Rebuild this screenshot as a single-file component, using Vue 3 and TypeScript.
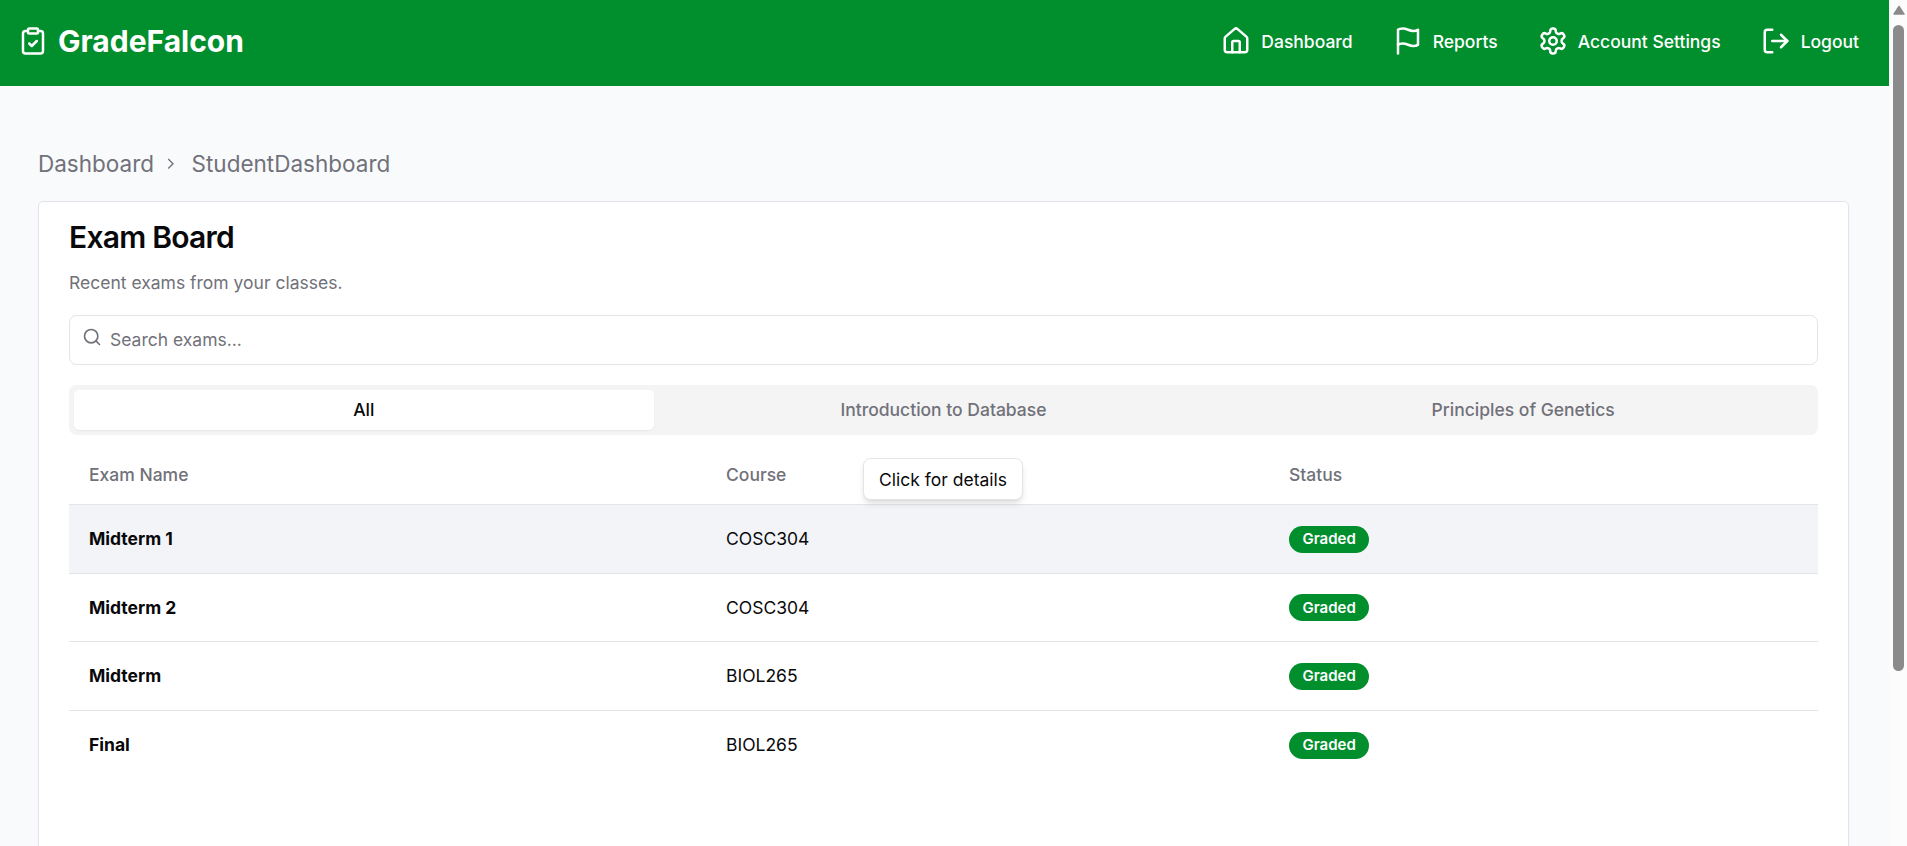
<script setup lang="ts">
interface NavItem {
  label: string
  paths: string[]
}

interface Exam {
  name: string
  course: string
  status: string
}

const navItems: NavItem[] = [
  {
    label: 'Dashboard',
    paths: [
      'M15 21v-8a1 1 0 0 0-1-1h-4a1 1 0 0 0-1 1v8',
      'M3 10a2 2 0 0 1 .709-1.528l7-5.999a2 2 0 0 1 2.582 0l7 5.999A2 2 0 0 1 21 10v9a2 2 0 0 1-2 2H5a2 2 0 0 1-2-2z',
    ],
  },
  {
    label: 'Reports',
    paths: ['M4 15s1-1 4-1 5 2 8 2 4-1 4-1V3s-1 1-4 1-5-2-8-2-4 1-4 1z', 'M4 22v-7'],
  },
  {
    label: 'Account Settings',
    paths: [
      'M12.22 2h-.44a2 2 0 0 0-2 2v.18a2 2 0 0 1-1 1.73l-.43.25a2 2 0 0 1-2 0l-.15-.08a2 2 0 0 0-2.73.73l-.22.38a2 2 0 0 0 .73 2.73l.15.1a2 2 0 0 1 1 1.72v.51a2 2 0 0 1-1 1.74l-.15.09a2 2 0 0 0-.73 2.73l.22.38a2 2 0 0 0 2.73.73l.15-.08a2 2 0 0 1 2 0l.43.25a2 2 0 0 1 1 1.73V20a2 2 0 0 0 2 2h.44a2 2 0 0 0 2-2v-.18a2 2 0 0 1 1-1.73l.43-.25a2 2 0 0 1 2 0l.15.08a2 2 0 0 0 2.73-.73l.22-.39a2 2 0 0 0-.73-2.73l-.15-.08a2 2 0 0 1-1-1.74v-.5a2 2 0 0 1 1-1.74l.15-.09a2 2 0 0 0 .73-2.73l-.22-.38a2 2 0 0 0-2.73-.73l-.15.08a2 2 0 0 1-2 0l-.43-.25a2 2 0 0 1-1-1.73V4a2 2 0 0 0-2-2z',
      'M15 12a3 3 0 1 1-6 0 3 3 0 0 1 6 0z',
    ],
  },
  {
    label: 'Logout',
    paths: ['M9 21H5a2 2 0 0 1-2-2V5a2 2 0 0 1 2-2h4', 'm16 17 5-5-5-5', 'M21 12H9'],
  },
]

const tabs: string[] = ['All', 'Introduction to Database', 'Principles of Genetics']

const exams: Exam[] = [
  { name: 'Midterm 1', course: 'COSC304', status: 'Graded' },
  { name: 'Midterm 2', course: 'COSC304', status: 'Graded' },
  { name: 'Midterm', course: 'BIOL265', status: 'Graded' },
  { name: 'Final', course: 'BIOL265', status: 'Graded' },
]
</script>

<template>
  <div class="window">
    <div class="page">
      <header class="topbar">
        <div class="brand">
          <svg class="icon" viewBox="0 0 24 24">
            <rect x="8" y="2" width="8" height="4" rx="1" />
            <path d="M16 4h2a2 2 0 0 1 2 2v14a2 2 0 0 1-2 2H6a2 2 0 0 1-2-2V6a2 2 0 0 1 2-2h2" />
            <path d="m9 14 2 2 4-4" />
          </svg>
          <span class="brand-name">GradeFalcon</span>
        </div>
        <nav class="nav">
          <a v-for="item in navItems" :key="item.label" class="nav-link">
            <svg class="icon" viewBox="0 0 24 24">
              <path v-for="d in item.paths" :key="d" :d="d" />
            </svg>
            <span>{{ item.label }}</span>
          </a>
        </nav>
      </header>

      <main class="main">
        <div class="breadcrumb">
          <span>Dashboard</span>
          <svg class="chevron" viewBox="0 0 15 15"><path d="M6.2 3.4 10.3 7.5 6.2 11.6" /></svg>
          <span>StudentDashboard</span>
        </div>

        <section class="card">
          <h1 class="title">Exam Board</h1>
          <p class="subtitle">Recent exams from your classes.</p>

          <div class="search">
            <svg class="search-icon" viewBox="0 0 24 24">
              <circle cx="11" cy="11" r="8" />
              <path d="m21 21-4.3-4.3" />
            </svg>
            <input class="search-input" type="text" placeholder="Search exams..." />
          </div>

          <div class="tabs">
            <button v-for="(tab, i) in tabs" :key="tab" class="tab" :class="{ active: i === 0 }">{{ tab }}</button>
          </div>

          <div class="table">
            <div class="row head">
              <span>Exam Name</span>
              <span>Course</span>
              <span>Status</span>
            </div>
            <div v-for="(exam, i) in exams" :key="exam.name" class="row" :class="{ hovered: i === 0 }">
              <span class="name">{{ exam.name }}</span>
              <span>{{ exam.course }}</span>
              <span class="status"><b class="badge">{{ exam.status }}</b></span>
            </div>
            <div class="tooltip">Click for details</div>
          </div>
        </section>
      </main>
    </div>

    <div class="scrollbar">
      <svg class="scroll-arrow" viewBox="0 0 12 10"><path d="M6 1 11 8.6H1Z" /></svg>
      <div class="thumb"></div>
    </div>
  </div>
</template>

<style>
body {
  margin: 0;
  overflow: hidden;
}
</style>

<style scoped>
.window {
  display: flex;
  width: 100%;
  height: 846px;
  overflow: hidden;
  font-family: Inter, "Liberation Sans", sans-serif;
  font-size: 17.5px;
  line-height: 25px;
  color: #09090b;
}
.window * {
  box-sizing: border-box;
}
.page {
  flex: 1;
  height: 846px;
  overflow: hidden;
  background: #f8fafc;
}
.topbar {
  display: flex;
  justify-content: space-between;
  align-items: center;
  height: 86px;
  padding: 0 30px 4px 18px;
  background: #018e2d;
  color: #fff;
}
.brand {
  display: flex;
  align-items: center;
  gap: 10px;
}
.brand-name {
  font-size: 30px;
  font-weight: 700;
  line-height: 40px;
}
.icon {
  display: block;
  width: 30px;
  height: 30px;
  fill: none;
  stroke: currentColor;
  stroke-width: 2;
  stroke-linecap: round;
  stroke-linejoin: round;
}
.nav {
  display: flex;
  gap: 40px;
}
.nav-link {
  display: flex;
  align-items: center;
  gap: 10px;
  font-weight: 500;
}
.main {
  padding: 60px 40px 0 38px;
}
.breadcrumb {
  display: flex;
  align-items: center;
  height: 35px;
  font-size: 22.5px;
  color: #71717a;
}
.chevron {
  width: 17.5px;
  height: 17.5px;
  margin: 0 13px 0 7px;
  fill: none;
  stroke: currentColor;
  stroke-width: 1.15;
}
.card {
  height: 800px;
  margin-top: 20px;
  padding: 15px 30px;
  background: #fff;
  border: 1px solid #e2e4e9;
  border-radius: 5px;
  box-shadow: 0 1px 2px rgba(0, 0, 0, 0.04);
}
.title {
  margin: 0;
  font-size: 30px;
  font-weight: 600;
  line-height: 40px;
  letter-spacing: -0.75px;
}
.subtitle {
  margin: 13px 0 0;
  color: #71717a;
}
.search {
  display: flex;
  height: 50px;
  margin-top: 20px;
  padding: 0 11.5px;
  border: 1px solid #e4e4e7;
  border-radius: 7.5px;
}
.search-icon {
  width: 20px;
  height: 20px;
  margin-top: 10.5px;
  fill: none;
  stroke: #71717a;
  stroke-width: 2;
  stroke-linecap: round;
  stroke-linejoin: round;
}
.search-input {
  flex: 1;
  padding: 0 0 2px 8.5px;
  border: 0;
  outline: 0;
  background: transparent;
  font: inherit;
}
.search-input::placeholder {
  color: #71717a;
}
.tabs {
  display: grid;
  grid-template-columns: repeat(3, 1fr);
  height: 50px;
  margin-top: 20px;
  padding: 5px;
  border-radius: 7.5px;
  background: #f4f4f4;
}
.tab {
  padding: 0 0 2px;
  border: 0;
  border-radius: 5px;
  background: transparent;
  font: inherit;
  font-weight: 500;
  color: #71717a;
}
.tab.active {
  background: #fff;
  color: #09090b;
  box-shadow: 0 1px 2px rgba(0, 0, 0, 0.05);
}
.table {
  position: relative;
  margin-top: 10px;
}
.row {
  display: grid;
  grid-template-columns: 637px 563px 1fr;
  align-items: center;
  height: 68.6px;
  border-bottom: 1px solid #e2e4e8;
}
.row:nth-child(5) {
  border-bottom-color: transparent;
}
.row > span {
  padding-left: 20px;
}
.head {
  height: 60px;
  color: #71717a;
  font-weight: 500;
}
.hovered {
  background: #f2f4f8;
}
.row > .name {
  font-weight: 700;
}
.row > .status {
  padding-top: 1px;
}
.badge {
  display: block;
  width: fit-content;
  padding: 3.5px 13.5px;
  border-radius: 14px;
  background: #018e2d;
  color: #fff;
  font-size: 15px;
  font-weight: 600;
  line-height: 20px;
}
.tooltip {
  position: absolute;
  left: 794px;
  top: 13px;
  height: 42px;
  padding: 7.5px 15px;
  border: 1px solid #e4e4e7;
  border-radius: 7.5px;
  background: #fff;
  box-shadow: 0 5px 7px -1px rgba(0, 0, 0, 0.1), 0 2px 4px -2px rgba(0, 0, 0, 0.1);
}
.scrollbar {
  width: 18px;
  height: 846px;
  padding: 5px 3px 0 4px;
  background: #fcfcfc;
}
.scroll-arrow {
  display: block;
  width: 12px;
  height: 11px;
  fill: #8b8b8b;
  stroke: #8b8b8b;
  stroke-width: 1.5;
  stroke-linejoin: round;
}
.thumb {
  width: 11px;
  height: 646px;
  margin-top: 9px;
  border-radius: 6px;
  background: #8b8b8b;
}
</style>
